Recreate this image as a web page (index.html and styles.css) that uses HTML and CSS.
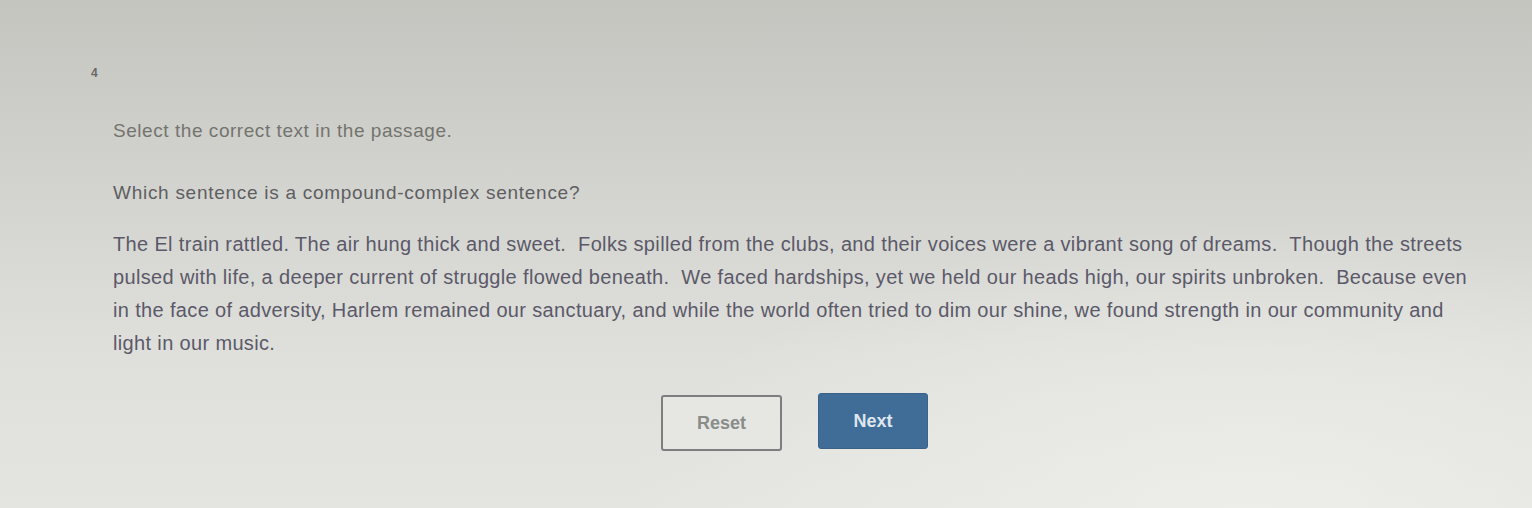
FILE: index.html
```html
<!DOCTYPE html>
<html>
<head>
<meta charset="utf-8">
<link rel="stylesheet" href="styles.css">
</head>
<body>
<main class="page">
  <div class="qnum">4</div>
  <p class="instr">Select the correct text in the passage.</p>
  <p class="question">Which sentence is a compound-complex sentence?</p>
  <p class="passage">The El train rattled. The air hung thick and sweet. &nbsp;Folks spilled from the clubs, and their voices were a vibrant song of dreams. &nbsp;Though the streets pulsed with life, a deeper current of struggle flowed beneath. &nbsp;We faced hardships, yet we held our heads high, our spirits unbroken. &nbsp;Because even in the face of adversity, Harlem remained our sanctuary, and while the world often tried to dim our shine, we found strength in our community and light in our music.</p>
  <div class="actions">
    <button class="btn reset">Reset</button>
    <button class="btn next">Next</button>
  </div>
</main>
</body>
</html>
```
FILE: styles.css
```css
html, body {
  margin: 0;
  padding: 0;
  height: 100%;
}
body {
  width: 1532px;
  height: 508px;
  overflow: hidden;
  font-family: "Liberation Sans", Arial, sans-serif;
  background:
    radial-gradient(ellipse 900px 420px at 1250px 520px, rgba(238,239,235,0.9), rgba(238,239,235,0) 70%),
    linear-gradient(180deg, #c4c5bf 0%, #d2d3ce 35%, #dfe0db 70%, #e4e5e0 100%);
}
.page {
  padding: 66px 0 0 113px;
  color: #5a5a5e;
}
.qnum {
  margin-left: -22px;
  font-size: 12px;
  font-weight: bold;
  color: #6a6a6a;
  height: 18px;
}
.instr {
  margin: 36px 0 0;
  font-size: 19px;
  line-height: 22px;
  letter-spacing: 0.55px;
  color: #74746f;
}
.question {
  margin: 40px 0 0;
  font-size: 19px;
  line-height: 22px;
  letter-spacing: 0.72px;
  color: #5e5e62;
}
.passage {
  margin: 24px 0 0;
  width: 1362px;
  font-size: 20px;
  line-height: 33px;
  letter-spacing: 0.35px;
  color: #5b5969;
}
.actions {
  display: flex;
  gap: 36px;
  margin: 33px 0 0 548px;
  align-items: flex-start;
}
.btn {
  font-family: "Liberation Sans", Arial, sans-serif;
  font-size: 18px;
  font-weight: bold;
  border-radius: 3px;
  cursor: pointer;
}
.reset {
  width: 121px;
  height: 56px;
  margin-top: 2px;
  background: #e6e7e3;
  border: 2px solid #7e7e80;
  color: #8a8c8a;
}
.next {
  width: 110px;
  height: 56px;
  background: #3f6d97;
  border: 1px solid #3a6288;
  color: #dfe6ee;
}
```
